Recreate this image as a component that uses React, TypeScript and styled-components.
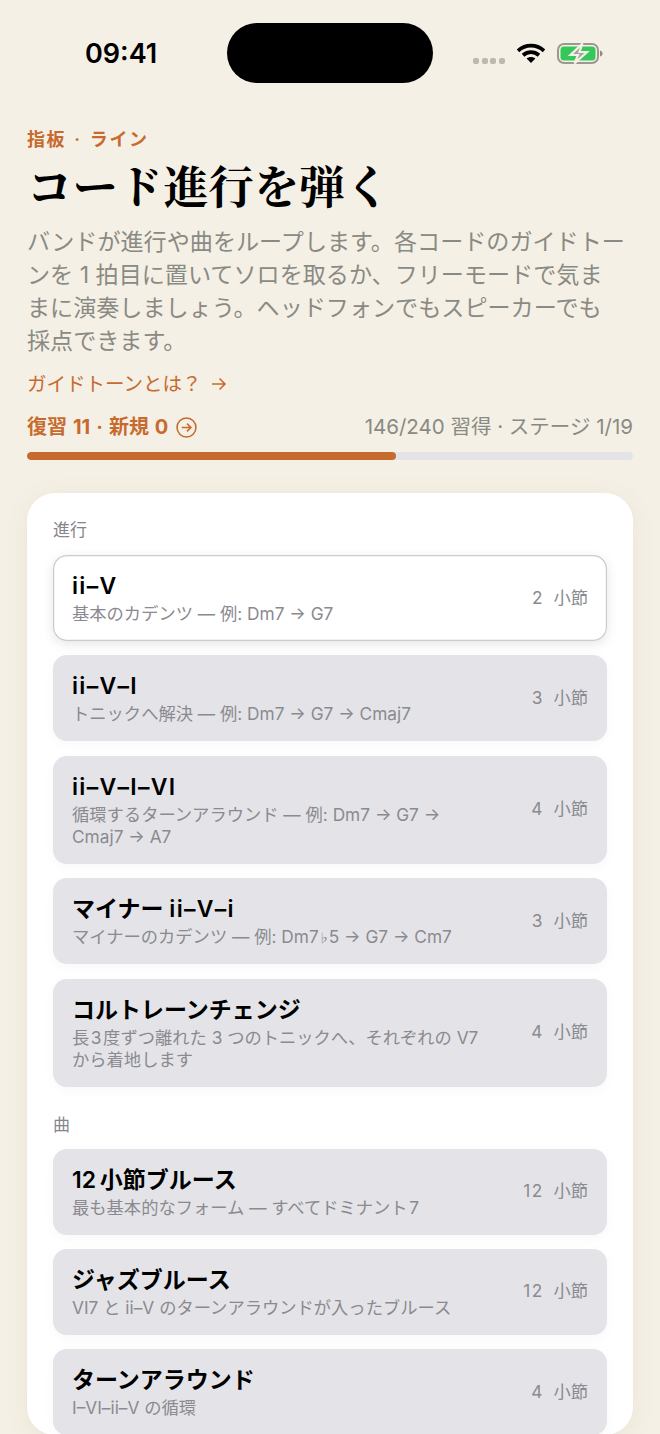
import React from "react";
import styled, { createGlobalStyle } from "styled-components";

const Global = createGlobalStyle`
  html, body { margin: 0; padding: 0; background: #f5f0e5; }
  body { font-family: Inter, "Noto Sans CJK JP", sans-serif; }
  * { box-sizing: border-box; }
`;

const Page = styled.div`
  width: 660px;
  height: 1434px;
  overflow: hidden;
  background: #f5f0e5;
`;

const StatusBar = styled.div`
  height: 129px;
  padding: 23px 0 0 85px;
  display: flex;
  align-items: flex-start;
`;

const Clock = styled.div`
  width: 142px;
  font: 600 27px/62px Inter, sans-serif;
  color: #000;
`;

const Island = styled.div`
  width: 206px;
  height: 60px;
  border-radius: 30px;
  background: #000;
`;

const StatusIcons = styled.div`
  height: 60px;
  margin-left: 40px;
  display: flex;
  align-items: center;
  gap: 12px;
`;

const Dots = styled.div`
  display: flex;
  gap: 2.5px;
  margin-top: 15px;
`;

const Dot = styled.span`
  width: 6px;
  height: 6px;
  border-radius: 2px;
  background: #bdb9b1;
`;

const Header = styled.header`
  padding: 0 27px;
`;

const Eyebrow = styled.div`
  font-size: 18px;
  line-height: 22px;
  font-weight: 600;
  letter-spacing: 1.6px;
  word-spacing: 2px;
  color: #c76a2e;
`;

const Title = styled.h1`
  margin: 6px 0 0;
  font-family: "Noto Serif CJK JP", "Noto Sans CJK JP", serif;
  font-size: 45.4px;
  line-height: 56px;
  font-weight: 700;
  color: #000;
`;

const Lead = styled.p`
  margin: 13px 0 0;
  font-size: 23.1px;
  line-height: 33px;
  color: #8a8a84;
`;

const GuideLink = styled.div`
  margin-top: 13px;
  font-size: 19.5px;
  line-height: 26px;
  color: #c76a2e;
  display: flex;
  align-items: center;
  gap: 8px;
`;

const Stats = styled.div`
  margin-top: 17px;
  display: flex;
  align-items: center;
  justify-content: space-between;
`;

const Review = styled.div`
  font-size: 20px;
  line-height: 26px;
  font-weight: 700;
  word-spacing: 1.25px;
  color: #c76a2e;
  display: flex;
  align-items: center;
  gap: 8px;
`;

const Mastery = styled.div`
  font-size: 20.5px;
  line-height: 26px;
  color: #8a8a84;
`;

const Track = styled.div`
  margin-top: 12px;
  height: 8px;
  border-radius: 4px;
  background: #e4e4e8;
  overflow: hidden;
`;

const Fill = styled.div`
  height: 100%;
  border-radius: 4px;
  background: #c76a2e;
`;

const Card = styled.section`
  margin: 33px 27px 0;
  padding: 27px 26px 0;
  border-radius: 28px;
  background: #fff;
  box-shadow: 0 4px 24px rgba(120, 100, 60, 0.08);
`;

const SectionLabel = styled.div<{ $spaced?: boolean }>`
  margin-top: ${(p) => (p.$spaced ? "28px" : "0")};
  margin-bottom: ${(p) => (p.$spaced ? "13px" : "14px")};
  font-size: 17px;
  line-height: 21px;
  color: #85858b;
`;

const List = styled.div`
  display: flex;
  flex-direction: column;
  gap: 14.4px;
`;

const Row = styled.div<{ $selected?: boolean }>`
  display: flex;
  align-items: center;
  justify-content: space-between;
  padding: 15px 19px 16px;
  border-radius: 14px;
  background: ${(p) => (p.$selected ? "#fff" : "#e4e4e8")};
  box-shadow: ${(p) =>
    p.$selected
      ? "inset 0 0 0 1.2px #cbcbcd, 0 3px 12px rgba(0,0,0,0.1)"
      : "0 3px 12px rgba(0,0,0,0.03)"};
`;

const RowText = styled.div`
  width: 410px;
`;

const RowTitle = styled.div`
  font-size: 23px;
  line-height: 33px;
  font-weight: 600;
  color: #000;
`;

const Latin = styled.span`
  letter-spacing: 1.3px;
`;

const RowSub = styled.div`
  font-size: 17.3px;
  line-height: 22px;
  color: #8a8a90;
`;

const Flat = styled.span`
  font-size: 12px;
  line-height: 0;
  margin: 0 -1px;
`;

const Bars = styled.div`
  font-size: 17.3px;
  line-height: 22px;
  color: #8a8a90;
  display: flex;
  gap: 9.5px;
`;

const Count = styled.span`
  letter-spacing: 1.5px;
`;

type Item = { t: React.ReactNode; s: React.ReactNode; b: string; sel?: boolean };

const items1: Item[] = [
  { t: <Latin>ii–V</Latin>, s: "基本のカデンツ — 例: Dm7 → G7", b: "2", sel: true },
  { t: <Latin>ii–V–I</Latin>, s: "トニックへ解決 — 例: Dm7 → G7 → Cmaj7", b: "3" },
  { t: <Latin>ii–V–I–VI</Latin>, s: "循環するターンアラウンド — 例: Dm7 → G7 → Cmaj7 → A7", b: "4" },
  { t: <>マイナー <Latin>ii–V–i</Latin></>, s: <>マイナーのカデンツ — 例: Dm7<Flat>♭</Flat>5 → G7 → Cm7</>, b: "3" },
  { t: "コルトレーンチェンジ", s: "長\u200a3\u200a度ずつ離れた 3 つのトニックへ、それぞれの V7 から着地します", b: "4" },
];
const items2: Item[] = [
  { t: "12\u2009小節ブルース", s: "最も基本的なフォーム — すべてドミナント\u200a7", b: "12" },
  { t: "ジャズブルース", s: "VI7 と ii–V のターンアラウンドが入ったブルース", b: "12" },
  { t: "ターンアラウンド", s: "I–VI–ii–V の循環", b: "4" },
];

const Rows = ({ items }: { items: Item[] }) => (
  <List>
    {items.map((i, n) => (
      <Row key={n} $selected={i.sel}>
        <RowText>
          <RowTitle>{i.t}</RowTitle>
          <RowSub>{i.s}</RowSub>
        </RowText>
        <Bars><Count>{i.b}</Count><span>小節</span></Bars>
      </Row>
    ))}
  </List>
);

export default function App() {
  return (
    <Page>
      <Global />
      <StatusBar>
        <Clock>09:41</Clock>
        <Island />
        <StatusIcons>
          <Dots><Dot /><Dot /><Dot /><Dot /></Dots>
          <svg width="28" height="20" viewBox="0 0 28 20">
            <path d="M1 7.8C8.5 1 19.5 1 27 7.8" fill="none" stroke="#000" strokeWidth="3.8" />
            <path d="M6 12.2C10.8 8.2 17.2 8.2 22 12.2" fill="none" stroke="#000" strokeWidth="3.8" />
            <path d="M14 20L9.6 15.6C12.2 13.6 15.8 13.6 18.4 15.6Z" fill="#000" />
          </svg>
          <svg width="46" height="21" viewBox="0 0 46 21">
            <rect x="1" y="1" width="40" height="19" rx="6" fill="none" stroke="#9a9890" strokeWidth="2" />
            <rect x="3.5" y="3.5" width="35" height="14" rx="3.5" fill="#34c759" />
            <path d="M43 7.5v6c1.8-.5 2.6-1.7 2.6-3s-.8-2.5-2.6-3Z" fill="#8f8d86" />
            <path d="M25.5 0.5L13.5 12h7.5L17.5 20.5L30 9h-7.5Z" fill="#a5a39c" stroke="#f5f0e5" strokeWidth="2.2" />
          </svg>
        </StatusIcons>
      </StatusBar>
      <Header>
        <Eyebrow>指板 · ライン</Eyebrow>
        <Title>コード進行を弾く</Title>
        <Lead>
          バンドが進行や曲をループします。各コードのガイドトー<br />
          ンを 1 拍目に置いてソロを取るか、フリーモードで気ま<br />
          まに演奏しましょう。ヘッドフォンでもスピーカーでも<br />
          採点できます。
        </Lead>
        <GuideLink>
          ガイドトーンとは？
          <svg width="18" height="16" viewBox="0 0 18 16" fill="none" stroke="#c76a2e" strokeWidth="1.6">
            <path d="M2 8h13M9.5 2.5L15 8l-5.5 5.5" />
          </svg>
        </GuideLink>
        <Stats>
          <Review>
            復習 11 · 新規 0
            <svg width="21" height="21" viewBox="0 0 20 20" fill="none" stroke="#c76a2e" strokeWidth="1.5">
              <circle cx="10" cy="10" r="9" />
              <path d="M5.5 10h8.5M10.5 6.3L14.2 10l-3.7 3.7" />
            </svg>
          </Review>
          <Mastery>146/240 習得 · ステージ 1/19</Mastery>
        </Stats>
        <Track><Fill style={{ width: `${(146 / 240) * 100}%` }} /></Track>
      </Header>
      <Card>
        <SectionLabel>進行</SectionLabel>
        <Rows items={items1} />
        <SectionLabel $spaced>曲</SectionLabel>
        <Rows items={items2} />
      </Card>
    </Page>
  );
}
